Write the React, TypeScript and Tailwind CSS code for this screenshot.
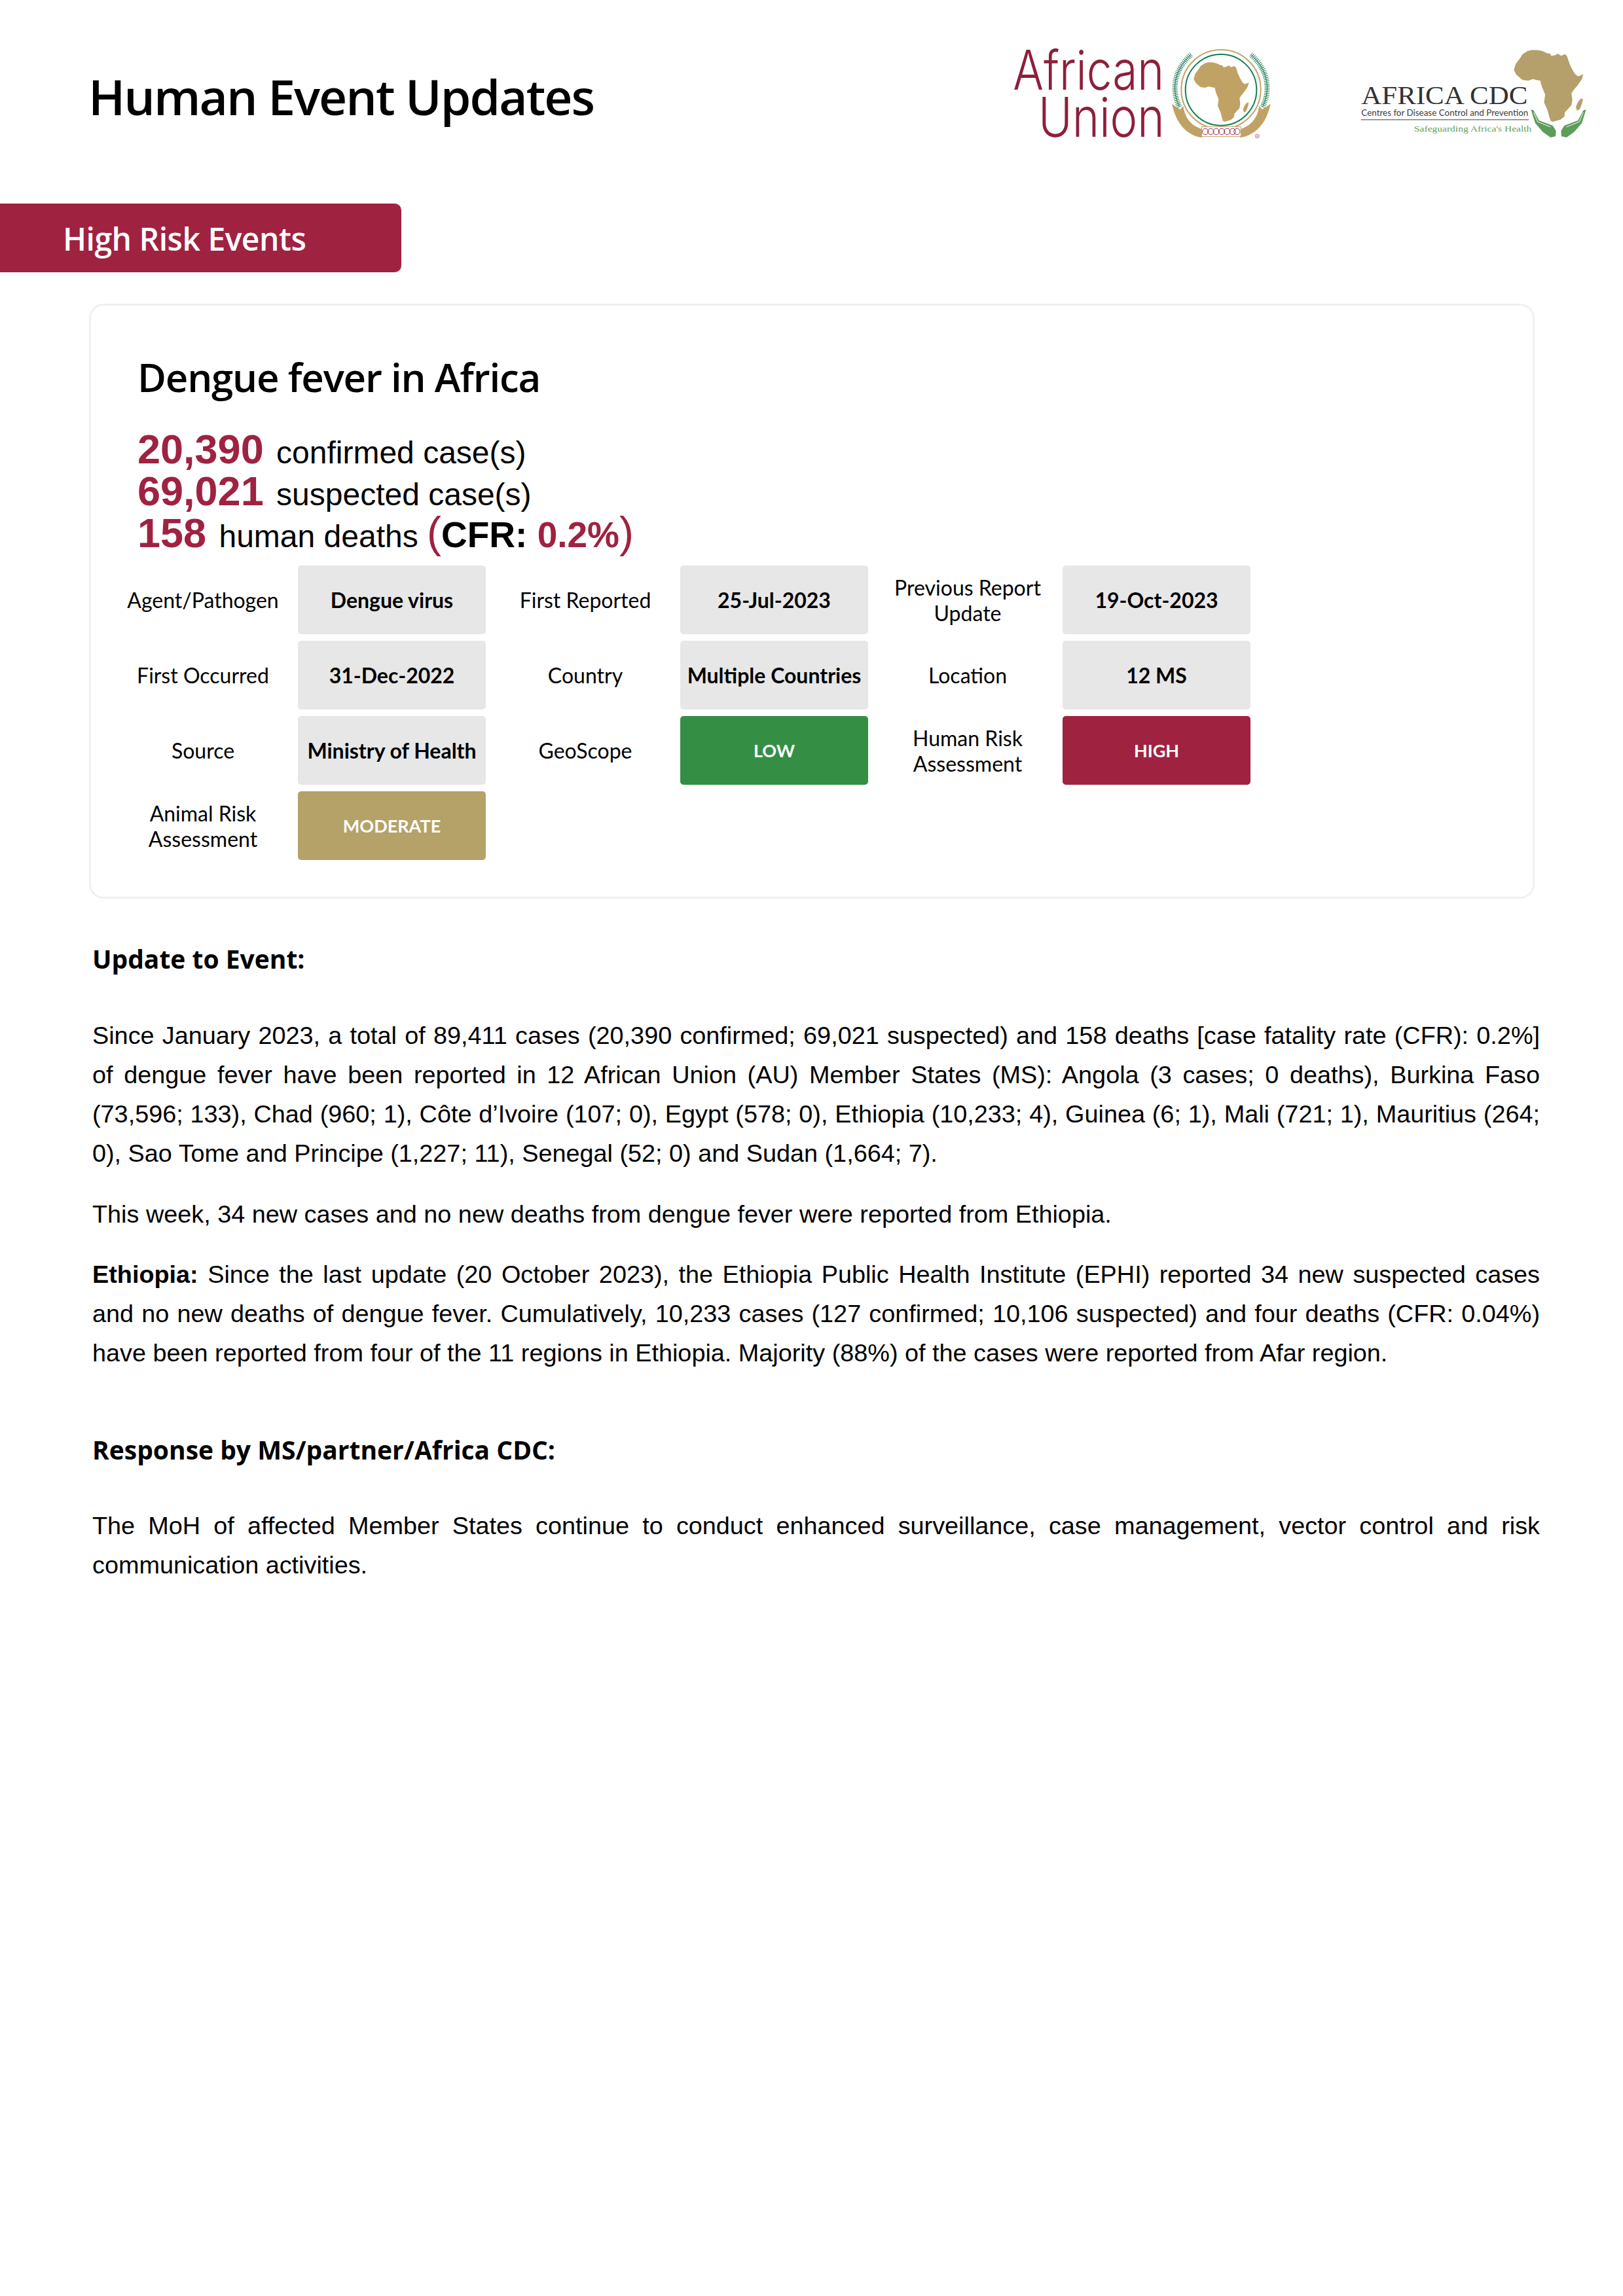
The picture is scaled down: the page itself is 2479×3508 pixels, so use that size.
import React from "react";

const africaPath =
  "M930 140 L945 136 L965 136 L985 140 L1000 148 L1012 150 L1016 158 L1030 156 L1040 150 L1052 158 L1066 152 L1074 160 L1082 186 L1092 208 L1102 226 L1114 236 L1133 228 L1128 246 L1112 270 L1096 290 L1090 300 L1093 325 L1090 345 L1075 362 L1066 372 L1064 388 L1050 400 L1022 408 L1014 405 L1008 385 L1003 365 L990 335 L994 305 L982 275 L976 252 L962 250 L950 246 L932 252 L912 250 L900 240 L888 228 L880 212 L886 190 L902 168 L912 152 Z";
const madagascarPath = "M1124 320 L1132 322 L1128 340 L1120 360 L1110 366 L1106 352 L1112 336 Z";

const AfricanUnionLogo = () => (
  <svg width="430" height="190" viewBox="0 0 1290 570" className="shrink-0">
    <text x="52" y="262" fontFamily="Inter, sans-serif" fontWeight="300" fontSize="250" fill="#8e1f3a" textLength="692" lengthAdjust="spacingAndGlyphs">
      African
    </text>
    <text x="168" y="478" fontFamily="Inter, sans-serif" fontWeight="300" fontSize="250" fill="#8e1f3a" textLength="578" lengthAdjust="spacingAndGlyphs">
      Union
    </text>
    <circle cx="1005" cy="260" r="182" fill="none" stroke="#c2a468" strokeWidth="6" />
    <circle cx="1005" cy="262" r="163" fill="none" stroke="#0f7f57" strokeWidth="6" />
    <path d={africaPath} fill="#c0a265" />
    <path d={madagascarPath} fill="#c0a265" />
    <path d="M815 340 C775 260 790 170 868 100" fill="none" stroke="#167a50" strokeWidth="3" />
    <path d="M815 340 C775 260 790 170 868 100" fill="none" stroke="#167a50" strokeWidth="24" strokeDasharray="3 5" />
    <path d="M1195 340 C1235 260 1220 170 1142 100" fill="none" stroke="#167a50" strokeWidth="3" />
    <path d="M1195 340 C1235 260 1220 170 1142 100" fill="none" stroke="#167a50" strokeWidth="24" strokeDasharray="3 5" />
    <path d="M780 326 L818 352 L832 335 C840 395 870 425 918 442 L918 481 C850 470 800 420 780 326 Z" fill="#c0a265" />
    <path d="M1232 326 L1194 352 L1180 335 C1172 395 1140 425 1095 442 L1092 481 C1160 470 1212 420 1232 326 Z" fill="#c0a265" />
    <rect x="916" y="431" width="180" height="45" fill="#fff" stroke="#c0a265" strokeWidth="3" />
    {[933, 958, 983, 1008, 1033, 1058, 1078].map((cx) => (
      <circle key={cx} cx={cx} cy="453" r="14" fill="none" stroke="#a3304f" strokeWidth="3" />
    ))}
    <circle cx="1171" cy="474" r="9" fill="none" stroke="#a3304f" strokeWidth="2" />
    <circle cx="1171" cy="474" r="3" fill="#a3304f" />
  </svg>
);

const AfricaCdcLogo = () => (
  <svg width="380" height="170" viewBox="0 0 1140 510" className="ml-[100px] mt-[10px] shrink-0">
    <g transform="translate(757 48) scale(1.257 1.209) translate(-880 -135)">
      <path d={africaPath} fill="#b59f6b" />
      <path d={madagascarPath} fill="#b59f6b" />
    </g>
    <text x="58" y="297" fontFamily="'Liberation Serif', serif" fontSize="122" fill="#333333" textLength="762" lengthAdjust="spacingAndGlyphs">
      AFRICA CDC
    </text>
    <text x="58" y="350" fontFamily="Lato, sans-serif" fontSize="40" fill="#3c3c3c" textLength="765" lengthAdjust="spacingAndGlyphs">
      Centres for Disease Control and Prevention
    </text>
    <rect x="56" y="366" width="770" height="5" fill="#8a8a8a" />
    <text x="300" y="422" fontFamily="'Liberation Serif', serif" fontSize="40" fill="#5f9f5b" textLength="538" lengthAdjust="spacingAndGlyphs">
      Safeguarding Africa's Health
    </text>
    <path d="M835 322 L848 326 L872 372 L935 396 L950 420 L948 445 L925 450 L890 425 L855 385 Z" fill="#5d9c59" />
    <path d="M1088 322 L1075 326 L1051 372 L988 396 L973 420 L975 445 L998 450 L1033 425 L1068 385 Z" fill="#5d9c59" />
    <path d="M848 335 L866 378 L925 402 M1075 335 L1057 378 L998 402" fill="none" stroke="#fff" strokeWidth="3" />
  </svg>
);

const calibri = "font-['Lato',sans-serif]";
const segoe = "font-['Open_Sans',sans-serif]";

type Cell = { label: string[]; value: string; tone?: string };

const cells: Cell[] = [
  { label: ["Agent/Pathogen"], value: "Dengue virus" },
  { label: ["First Reported"], value: "25-Jul-2023" },
  { label: ["Previous Report", "Update"], value: "19-Oct-2023" },
  { label: ["First Occurred"], value: "31-Dec-2022" },
  { label: ["Country"], value: "Multiple Countries" },
  { label: ["Location"], value: "12 MS" },
  { label: ["Source"], value: "Ministry of Health" },
  { label: ["GeoScope"], value: "LOW", tone: "bg-[#348f45]" },
  { label: ["Human Risk", "Assessment"], value: "HIGH", tone: "bg-[#9f2241]" },
  { label: ["Animal Risk", "Assessment"], value: "MODERATE", tone: "bg-[#b4a269]" },
];

const EventGrid = () => (
  <div className="grid grid-cols-[297px_287px_297px_287px_297px_287px] gap-y-[10px]">
    {cells.map((cell) => (
      <React.Fragment key={cell.value}>
        <div className={`${calibri} flex flex-col justify-center pl-[10px] pr-[3px] text-center text-[32px] leading-[39px] text-black`}>
          {cell.label.map((line) => (
            <span key={line}>{line}</span>
          ))}
        </div>
        <div
          className={`${calibri} flex h-[105px] items-center justify-center whitespace-nowrap rounded-[5px] ${
            cell.tone ? `${cell.tone} pt-[2px] text-[27px] font-bold text-white` : "bg-[#e7e7e7] text-[32px] font-bold text-black"
          }`}
        >
          {cell.value}
        </div>
      </React.Fragment>
    ))}
  </div>
);

const Paragraph = ({ className, children }: { className: string; children: React.ReactNode }) => (
  <p className={`text-justify text-[37.8px] leading-[60px] text-black ${className}`}>{children}</p>
);

const Figure = ({ children }: { children: React.ReactNode }) => (
  <span className="mr-[6px] text-[63px] font-bold leading-[0] text-[#9f2241]">{children}</span>
);

export default function App() {
  return (
    <div className="h-[3508px] w-[2479px] overflow-hidden bg-white font-['Liberation_Sans',Arial,sans-serif]">
      <header className="flex items-start pl-[135px] pr-[39px] pt-[50px]">
        <h1 className={`${segoe} mt-[41px] flex-1 text-[75px] font-semibold leading-[112px] tracking-[-2px] text-black`}>
          Human Event Updates
        </h1>
        <AfricanUnionLogo />
        <AfricaCdcLogo />
      </header>

      <div className="mt-[71px] flex h-[105px] w-[613px] items-center rounded-r-[10px] bg-[#9f2241] pl-[96px] pt-[2px]">
        <span className={`${segoe} text-[48px] font-semibold tracking-[-0.5px] text-white`}>High Risk Events</span>
      </div>

      <section className="ml-[136px] mt-[48px] h-[909px] w-[2208px] rounded-[22px] border-[3px] border-[#f0f0f0] pl-[19px]">
        <div className="pl-[52px] pt-[67px]">
          <h2 className={`${segoe} text-[60px] font-semibold leading-[84px] tracking-[-1.2px] text-black`}>Dengue fever in Africa</h2>
          <div className="mt-[42px] flex flex-col text-[48px] leading-[64px] text-black">
            <div>
              <Figure>20,390</Figure> confirmed case(s)
            </div>
            <div>
              <Figure>69,021</Figure> suspected case(s)
            </div>
            <div>
              <Figure>158</Figure> human deaths{" "}
              <span className="text-[66px] leading-[0] text-[#9f2241]">(</span>
              <span className="text-[55px] font-bold leading-[0]">CFR: </span>
              <span className="text-[55px] font-bold leading-[0] text-[#9f2241]">0.2%</span>
              <span className="text-[66px] leading-[0] text-[#9f2241]">)</span>
            </div>
          </div>
        </div>
        <div className="mt-[12px]">
          <EventGrid />
        </div>
      </section>

      <main className="ml-[141px] w-[2211px]">
        <h3 className={`${segoe} mt-[62px] text-[39px] font-bold leading-[60px] text-black`}>Update to Event:</h3>
        <Paragraph className="mt-[57px]">
          Since January 2023, a total of 89,411 cases (20,390 confirmed; 69,021 suspected) and 158 deaths [case fatality rate (CFR): 0.2%] of
          dengue fever have been reported in 12 African Union (AU) Member States (MS): Angola (3 cases; 0 deaths), Burkina Faso (73,596; 133),
          Chad (960; 1), Côte d’Ivoire (107; 0), Egypt (578; 0), Ethiopia (10,233; 4), Guinea (6; 1), Mali (721; 1), Mauritius (264; 0), Sao
          Tome and Principe (1,227; 11), Senegal (52; 0) and Sudan (1,664; 7).
        </Paragraph>
        <Paragraph className="mt-[33px]">This week, 34 new cases and no new deaths from dengue fever were reported from Ethiopia.</Paragraph>
        <Paragraph className="mt-[32px]">
          <strong>Ethiopia:</strong> Since the last update (20 October 2023), the Ethiopia Public Health Institute (EPHI) reported 34 new
          suspected cases and no new deaths of dengue fever. Cumulatively, 10,233 cases (127 confirmed; 10,106 suspected) and four deaths (CFR:
          0.04%) have been reported from four of the 11 regions in Ethiopia. Majority (88%) of the cases were reported from Afar region.
        </Paragraph>
        <h3 className={`${segoe} mt-[88px] text-[39px] font-bold leading-[60px] text-black`}>Response by MS/partner/Africa CDC:</h3>
        <Paragraph className="mt-[56px]">
          The MoH of affected Member States continue to conduct enhanced surveillance, case management, vector control and risk communication
          activities.
        </Paragraph>
      </main>
    </div>
  );
}
